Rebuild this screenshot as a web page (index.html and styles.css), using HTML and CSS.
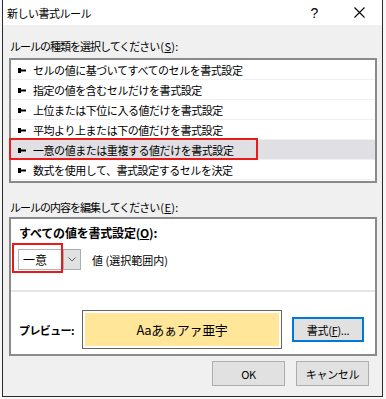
FILE: index.html
```html
<!DOCTYPE html>
<html lang="ja">
<head>
  <meta charset="UTF-8">
  <title>新しい書式ルール</title>
  <link rel="stylesheet" href="styles.css">
</head>
<body>

  <div class="dialog">
    <div class="titlebar">
      <span class="title">新しい書式ルール</span>
      <span class="tb-btn">?</span>
      <span class="tb-btn">
        <svg width="11" height="11" viewBox="0 0 11 11"><path d="M0.5 0.5L10.5 10.5M10.5 0.5L0.5 10.5" stroke="#000" stroke-width="1.1" fill="none"/></svg>
      </span>
    </div>

    <div class="content">
      <div class="label first">ルールの種類を選択してください<span class="key">(<u>S</u>):</span></div>

      <div class="listbox">
        <div class="row"><svg class="arrow" width="8" height="5" viewBox="0 0 8 5"><path d="M0 0H3V1.5H8V3.5H3V5H0Z" fill="#000"/></svg>セルの値に基づいてすべてのセルを書式設定</div>
        <div class="row"><svg class="arrow" width="8" height="5" viewBox="0 0 8 5"><path d="M0 0H3V1.5H8V3.5H3V5H0Z" fill="#000"/></svg>指定の値を含むセルだけを書式設定</div>
        <div class="row"><svg class="arrow" width="8" height="5" viewBox="0 0 8 5"><path d="M0 0H3V1.5H8V3.5H3V5H0Z" fill="#000"/></svg>上位または下位に入る値だけを書式設定</div>
        <div class="row"><svg class="arrow" width="8" height="5" viewBox="0 0 8 5"><path d="M0 0H3V1.5H8V3.5H3V5H0Z" fill="#000"/></svg>平均より上または下の値だけを書式設定</div>
        <div class="row selected"><svg class="arrow" width="8" height="5" viewBox="0 0 8 5"><path d="M0 0H3V1.5H8V3.5H3V5H0Z" fill="#000"/></svg>一意の値または重複する値だけを書式設定</div>
        <div class="row"><svg class="arrow" width="8" height="5" viewBox="0 0 8 5"><path d="M0 0H3V1.5H8V3.5H3V5H0Z" fill="#000"/></svg>数式を使用して、書式設定するセルを決定</div>
        <div class="mark mark-row"></div>
      </div>

      <div class="label second">ルールの内容を編集してください<span class="key">(<u>E</u>):</span></div>

      <div class="editbox">
        <div class="edit-top">
          <div class="heading">すべての値を書式設定(<u>O</u>):</div>
          <div class="combo-row">
            <div class="combo">
              <span class="combo-text">一意</span>
              <span class="combo-btn">
                <svg width="8" height="5" viewBox="0 0 8 5"><path d="M0.5 0.5L4 4L7.5 0.5" stroke="#606060" fill="none"/></svg>
              </span>
              <div class="mark mark-combo"></div>
            </div>
            <span class="combo-label">値 (選択範囲内)</span>
          </div>
        </div>

        <div class="preview-row">
          <span class="preview-label">プレビュー:</span>
          <div class="preview"><div class="preview-inner">Aaあぁアァ亜宇</div></div>
          <button class="btn fmt-btn">書式(<u>F</u>)...</button>
        </div>
      </div>

      <div class="actions">
        <button class="btn">OK</button>
        <button class="btn">キャンセル</button>
      </div>
    </div>
  </div>

</body>
</html>
```

FILE: styles.css
```css
body {
  margin: 0;
  background: #f7f7f7;
  font-family: "Noto Sans CJK JP", sans-serif;
  font-size: 11px;
  color: #000;
}

.dialog {
  margin-left: 2px;
  width: 381px;
  height: 397px;
  box-sizing: border-box;
  border: 1px solid #2b2b2b;
  border-top: none;
  background: #f0f0f0;
}

.titlebar {
  height: 25px;
  background: #fff;
  display: flex;
  align-items: center;
  padding-left: 4px;
}

.title {
  flex: 1;
  letter-spacing: -0.5px;
}

.tb-btn {
  width: 45px;
  height: 25px;
  display: flex;
  align-items: center;
  justify-content: center;
  font-family: "Liberation Sans", sans-serif;
  font-size: 14px;
}

.content {
  padding: 0 5px 0 6px;
}

.label {
  line-height: 16px;
  margin-left: 1px;
  letter-spacing: -1px;
}

.label .key {
  letter-spacing: 0.3px;
  margin-left: 1px;
}

.label.first {
  padding-top: 13px;
}

.label.second {
  margin-top: 16px;
}

u {
  text-decoration: underline;
  text-underline-offset: 1px;
}

.listbox {
  position: relative;
  margin-top: 4px;
  width: 368px;
  box-sizing: border-box;
  border: 2px solid #8a8a8a;
  background: #fff;
  padding-bottom: 1px;
}

.row {
  height: 20px;
  display: flex;
  align-items: center;
  letter-spacing: -0.45px;
  box-shadow: inset 0 -1px #f0f0f0;
}

.row.selected {
  background: #dfdfe4;
}

.arrow {
  margin: 0 7px 0 7px;
  flex-shrink: 0;
}

.mark {
  position: absolute;
  box-sizing: border-box;
  border: 2px solid #e81a1a;
}

.mark-row {
  left: -2px;
  top: 78px;
  width: 249px;
  height: 22px;
}

.editbox {
  margin-top: 2px;
  width: 368px;
  box-sizing: border-box;
  border: 2px solid #8a8a8a;
  background: #fff;
}

.edit-top {
  padding: 6px 0 20px 8px;
  border-bottom: 2px solid #e6e6e6;
}

.heading {
  line-height: 16px;
  font-size: 12px;
  font-weight: bold;
  letter-spacing: -0.2px;
}

.combo-row {
  display: flex;
  align-items: center;
  margin-top: 8px;
  margin-left: -1px;
}

.combo {
  position: relative;
  display: flex;
  height: 21px;
}

.combo-text {
  width: 45px;
  box-sizing: border-box;
  border: 1px solid #b4b4b4;
  border-right: none;
  padding-left: 4px;
  line-height: 19px;
  font-size: 12px;
}

.combo-btn {
  width: 18px;
  box-sizing: border-box;
  border: 1px solid #adadad;
  background: #e1e1e1;
  display: flex;
  align-items: center;
  justify-content: center;
}

.mark-combo {
  left: -6px;
  top: -6px;
  width: 51px;
  height: 30px;
}

.combo-label {
  margin-left: 11px;
}

.preview-row {
  display: flex;
  align-items: center;
  padding: 18px 0 5px 8px;
}

.preview-label {
  width: 63px;
  font-weight: bold;
  letter-spacing: -0.6px;
}

.preview {
  width: 200px;
  height: 39px;
  box-sizing: border-box;
  border: 1px solid #646464;
  padding: 2px;
}

.preview-inner {
  height: 100%;
  background: #ffe699;
  display: flex;
  align-items: center;
  justify-content: center;
  font-size: 13px;
  letter-spacing: -0.3px;
}

.btn {
  width: 73px;
  height: 25px;
  box-sizing: border-box;
  border: 1px solid #adadad;
  background: #e1e1e1;
  font-family: "Noto Sans CJK JP", sans-serif;
  font-size: 11px;
  letter-spacing: -0.3px;
  padding: 0;
  color: #000;
}

.fmt-btn {
  width: 72px;
  margin-left: 10px;
  border: 2px solid #0078d7;
}

.actions {
  display: flex;
  justify-content: flex-end;
  gap: 11px;
  margin-top: 5px;
  margin-right: 8px;
}
```
